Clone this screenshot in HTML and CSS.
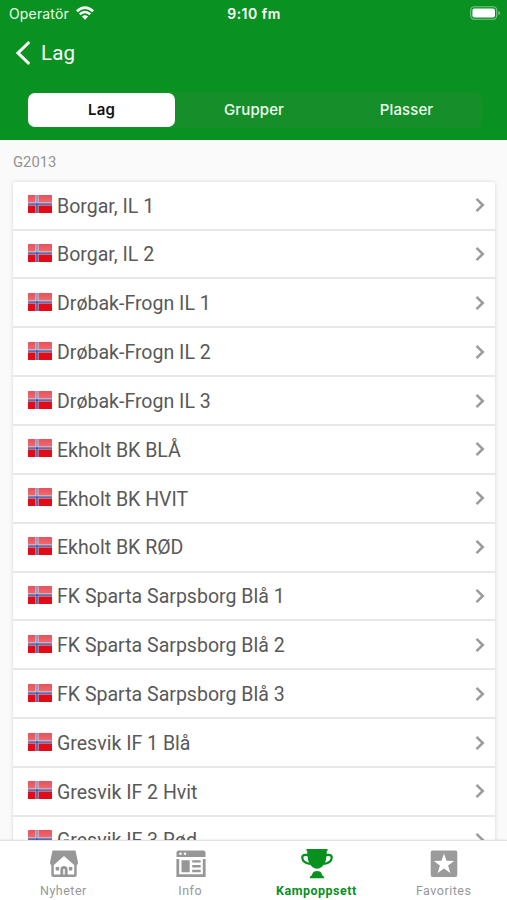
FILE: index.html
```html
<!DOCTYPE html>
<html lang="nb">
<head>
<meta charset="utf-8">
<meta name="viewport" content="width=device-width, initial-scale=1">
<title>Lag</title>
<link rel="stylesheet" href="styles.css">
</head>
<body>
<svg class="defs" aria-hidden="true">
  <defs>
    <linearGradient id="shine" x1="0" y1="0" x2="0" y2="1">
      <stop offset="0" stop-color="#fff" stop-opacity=".28"/>
      <stop offset="1" stop-color="#fff" stop-opacity=".4"/>
    </linearGradient>
    <symbol id="flag" viewBox="0 0 24 18">
      <rect width="24" height="18" rx=".6" fill="#e00d18"/>
      <path d="M0 9H24M9 0V18" stroke="#c3c6e0" stroke-width="3"/>
      <path d="M0 9H24M9 0V18" stroke="#3656a6" stroke-width="1.5"/>
      <rect width="24" height="8.4" fill="url(#shine)"/>
    </symbol>
    <symbol id="chevron" viewBox="0 0 10 16">
      <path d="M1.5 1.8L7.8 8L1.5 14.2" fill="none" stroke="#9b9b9b" stroke-width="2.5"/>
    </symbol>
  </defs>
</svg>
<div class="screen">
  <header class="header">
    <div class="status">
      <div class="carrier">Operatör
        <svg class="wifi" viewBox="0 0 18 14"><g fill="none" stroke="#fff" stroke-width="2.5"><path d="M.9 5.2Q9-2 17.1 5.2"/><path d="M3.8 8.3Q9 3.8 14.2 8.3"/></g><path d="M5.9 10.5Q9 7.8 12.1 10.5L9 13.7Z" fill="#fff"/></svg>
      </div>
      <div class="time">9:10 fm</div>
      <svg class="battery" viewBox="0 0 31 14"><rect x=".7" y=".7" width="26" height="12.6" rx="3.6" fill="none" stroke="#7cc486" stroke-width="1.1"/><rect x="2.4" y="2.4" width="22.6" height="9.2" rx="2" fill="#fff"/><path d="M28.3 5v4q1.9-.5 1.9-2t-1.9-2" fill="#7cc486"/></svg>
    </div>
    <div class="title">
      <svg class="back" viewBox="0 0 16 24"><path d="M13.3 2L3 12L13.3 22" fill="none" stroke="#fff" stroke-width="3.1" stroke-linecap="round"/></svg>
      <h1>Lag</h1>
    </div>
    <nav class="segments">
      <span class="segment selected">Lag</span>
      <span class="segment">Grupper</span>
      <span class="segment">Plasser</span>
    </nav>
  </header>
  <main class="content">
    <h2>G2013</h2>
    <ul class="teams">
      <li><svg class="flag"><use href="#flag"/></svg><span>Borgar, IL 1</span><svg class="chevron"><use href="#chevron"/></svg></li>
      <li><svg class="flag"><use href="#flag"/></svg><span>Borgar, IL 2</span><svg class="chevron"><use href="#chevron"/></svg></li>
      <li><svg class="flag"><use href="#flag"/></svg><span>Drøbak-Frogn IL 1</span><svg class="chevron"><use href="#chevron"/></svg></li>
      <li><svg class="flag"><use href="#flag"/></svg><span>Drøbak-Frogn IL 2</span><svg class="chevron"><use href="#chevron"/></svg></li>
      <li><svg class="flag"><use href="#flag"/></svg><span>Drøbak-Frogn IL 3</span><svg class="chevron"><use href="#chevron"/></svg></li>
      <li><svg class="flag"><use href="#flag"/></svg><span>Ekholt BK BLÅ</span><svg class="chevron"><use href="#chevron"/></svg></li>
      <li><svg class="flag"><use href="#flag"/></svg><span>Ekholt BK HVIT</span><svg class="chevron"><use href="#chevron"/></svg></li>
      <li><svg class="flag"><use href="#flag"/></svg><span>Ekholt BK RØD</span><svg class="chevron"><use href="#chevron"/></svg></li>
      <li><svg class="flag"><use href="#flag"/></svg><span>FK Sparta Sarpsborg Blå 1</span><svg class="chevron"><use href="#chevron"/></svg></li>
      <li><svg class="flag"><use href="#flag"/></svg><span>FK Sparta Sarpsborg Blå 2</span><svg class="chevron"><use href="#chevron"/></svg></li>
      <li><svg class="flag"><use href="#flag"/></svg><span>FK Sparta Sarpsborg Blå 3</span><svg class="chevron"><use href="#chevron"/></svg></li>
      <li><svg class="flag"><use href="#flag"/></svg><span>Gresvik IF 1 Blå</span><svg class="chevron"><use href="#chevron"/></svg></li>
      <li><svg class="flag"><use href="#flag"/></svg><span>Gresvik IF 2 Hvit</span><svg class="chevron"><use href="#chevron"/></svg></li>
      <li><svg class="flag"><use href="#flag"/></svg><span>Gresvik IF 3 Rød</span><svg class="chevron"><use href="#chevron"/></svg></li>
    </ul>
  </main>
  <nav class="tabs">
    <div class="tab">
      <svg viewBox="0 0 32 32"><path d="M4.5 2.5H27.5L30 14.5Q30 17 27.5 17H4.5Q2 17 2 14.5Z" fill="#979797"/><path d="M3.3 16H28.7V27Q28.7 29 26.7 29H5.3Q3.3 29 3.3 27Z" fill="#979797"/><path d="M5.8 17L16 8L26.2 17V26.4H5.8Z" fill="#fff"/><path d="M12.4 27V21.5Q12.4 18 16 18T19.6 21.5V27H16.8V21H15.2V27Z" fill="#979797"/><path d="M7.7 19h3.4v3.4H7.7zM20.9 19h3.4v3.4h-3.4z" fill="#979797"/></svg>
      <span>Nyheter</span>
    </div>
    <div class="tab">
      <svg viewBox="0 0 32 32"><path d="M1.5 4.5Q1.5 2.5 3.5 2.5H28.5Q30.5 2.5 30.5 4.5V9H1.5Z" fill="#979797"/><circle cx="5.5" cy="5.8" r="1.2" fill="#fff"/><circle cx="10" cy="5.8" r="1.2" fill="#fff"/><path d="M2.8 11V27.6H29.2V11" fill="none" stroke="#979797" stroke-width="2.8"/><path d="M6.5 12.2h8.2v12H6.5zM17.2 12.2h8.5v2.4h-8.5zM17.2 17h8.5v2.4h-8.5zM17.2 21.8h8.5v2.4h-8.5z" fill="#979797"/></svg>
      <span>Info</span>
    </div>
    <div class="tab active">
      <svg viewBox="0 0 32 32"><path d="M5.5 1H26.5V3H25.8Q26 14.8 21 18.8Q18.6 20.8 16 20.8T11 18.8Q6 14.8 6.2 3H5.5Z" fill="#07911f"/><path d="M7.3 6.8H4.2Q1.2 6.8 1.2 9.7Q1.8 15.3 9.5 15.8M24.7 6.8H27.8Q30.8 6.8 30.8 9.7Q30.2 15.3 22.5 15.8" fill="none" stroke="#07911f" stroke-width="2.2"/><path d="M12 24.5Q12.5 23 16 22.9T20 24.5L21.4 27.5Q23.3 28.3 23.3 30.2H8.7Q8.7 28.3 10.6 27.5Z" fill="#07911f"/></svg>
      <span>Kampoppsett</span>
    </div>
    <div class="tab">
      <svg viewBox="0 0 32 32"><rect x="2.7" y="2.5" width="26.6" height="26.6" rx="2" fill="#9b9b9b"/><path d="M16 5.5L18.5 12.8L26.2 13L20.1 17.6L22.3 25L16 20.6L9.7 25L11.9 17.6L5.8 13L13.5 12.8Z" fill="#fff"/></svg>
      <span>Favorites</span>
    </div>
  </nav>
</div>
</body>
</html>
```
FILE: styles.css
```css
* { box-sizing: border-box; }
body { margin: 0; font-family: Roboto, "Liberation Sans", sans-serif; }
h1, h2, ul { margin: 0; padding: 0; font-weight: 400; }
svg { display: block; flex: none; }
.defs { position: absolute; width: 0; height: 0; }
.screen { width: 507px; height: 900px; display: flex; flex-direction: column; overflow: hidden; background: #fafafa; }
.header { height: 140px; flex: none; background: #099222; color: #fff; }
.status { height: 28px; padding: 0 6px 0 9px; display: grid; grid-template-columns: 1fr auto 1fr; align-items: center; font: 14px/28px Inter, sans-serif; color: #e9ffe9; }
.carrier { display: flex; align-items: center; gap: 7px; letter-spacing: 0.15px; }
.wifi { width: 18px; height: 14px; margin-top: -2px; }
.time { font-weight: 600; letter-spacing: 0.5px; margin-right: 2px; color: #fff; }
.battery { width: 31px; height: 14px; justify-self: end; margin-top: -2px; }
.title { height: 49px; padding-left: 15px; display: flex; align-items: center; gap: 10px; }
.back { width: 16px; height: 24px; }
.title h1 { font-size: 20.5px; line-height: 28px; letter-spacing: 0.2px; }
.segments { height: 36px; margin: 15px 25px 0 27px; padding: 1px; display: grid; grid-template-columns: repeat(3, 1fr); border-radius: 8px; background: #168f2b; font: 500 15px/34px Inter, sans-serif; text-align: center; color: #effff0; }
.segment { height: 34px; padding-right: 1px; border-radius: 7px; letter-spacing: 0.1px; }
.segment:last-child { padding: 0 0 0 2px; }
.selected { margin-right: 4px; background: #fff; color: #111; font-weight: 600; padding: 0; }
.content { flex: 1; min-height: 0; overflow: hidden; padding: 0 12px 0 13px; }
h2 { height: 41.8px; padding-top: 2px; font-size: 14.8px; line-height: 41px; color: #929292; }
.teams { list-style: none; background: #fff; border-radius: 3px; box-shadow: 0 0 4px #00000026; }
.teams li { height: 48.85px; padding: 0 10px 0 15px; display: flex; align-items: center; border-bottom: 2px solid #e8e8e8; color: #595959; font-size: 19.55px; line-height: 24px; }
.teams span { flex: 1; margin: 2.6px 0 0 5px; }
.flag { width: 24px; height: 18px; margin-top: -2px; }
.chevron { width: 10px; height: 16px; }
.tabs { height: 60px; flex: none; display: grid; grid-template-columns: repeat(4, 1fr); background: #fff; border-top: 1px solid #e2e2e2; box-shadow: 0 0 2px #0002; position: relative; }
.tab { display: flex; flex-direction: column; align-items: center; padding: 7px 0 0 1px; color: #979797; font-size: 12.5px; line-height: 16px; letter-spacing: 0.5px; }
.tab svg { width: 32px; height: 32px; }
.tab span { margin: 3px 1px 0 0; }
.active { padding-left: 0; color: #07911f; font-weight: 700; }
```
